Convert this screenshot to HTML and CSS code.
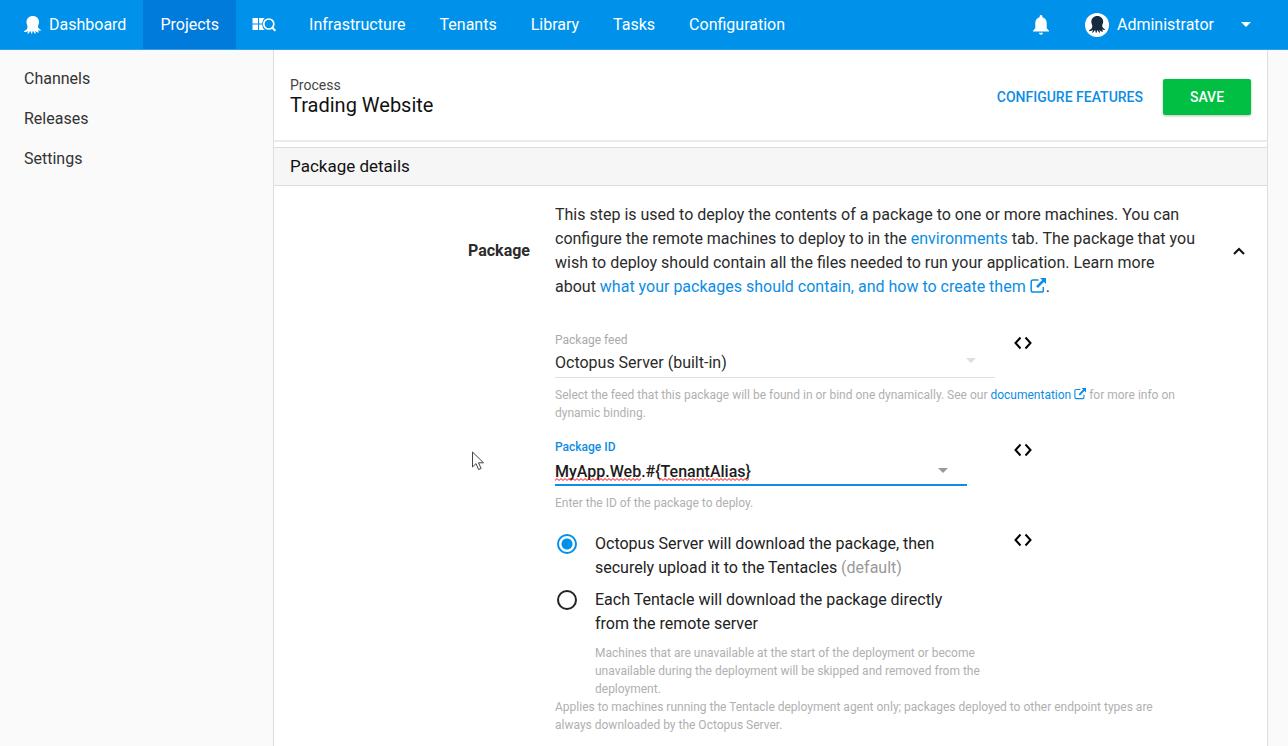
FILE: index.html
```html
<!DOCTYPE html>
<html lang="en">
<head>
<meta charset="utf-8">
<meta name="viewport" content="width=device-width, initial-scale=1">
<title>Trading Website - Process</title>
<link rel="stylesheet" href="styles.css">
</head>
<body>
<svg class="defs" aria-hidden="true">
  <symbol id="octopus" viewBox="0 0 16 17">
    <path d="M8.300 0C4.800 0 2.300 2.500 2.300 5.800c0 1.700.9 2.800 1 4.300.1 1.800-1 3-2.700 3.900-.9.500-.6 1.200.2 1.200 1.100 0 2.300-.4 3.200-1.100-.1.700-.4 1.200-.7 1.800-.3.700.3 1.100.8.600.9-.7 1.400-1.500 1.800-2.500.5.600.7 1.500.8 2.400.1.600.9.600 1 0 .2-.8.300-1.600.6-2.400.6.800 1.100 1.700 1.800 2.500.5.500 1.100.2.9-.4-.2-.8-.4-1.500-.6-2.200.9 1 1.800 1.600 2.900 1.800.7.100.9-.4.500-.9-.4-.5-.6-1-.7-1.500.7.400 1.400.700 2.200.700.8 0 .9-.6.300-1-1.700-1-2.600-2-2.400-3.400.2-1.400 1-2.300 1-3.800C14.200 2.500 11.800 0 8.300 0z"/>
  </symbol>
  <symbol id="code" viewBox="0 0 18 14">
    <path d="M6.500 1.500 1.500 7l5 5.500M11.500 1.500l5 5.500-5 5.500" fill="none" stroke="currentColor" stroke-width="2"/>
  </symbol>
  <symbol id="external" viewBox="0 0 16 16">
    <path d="M8.500 2H3A1.800 1.800 0 0 0 1.200 3.800v8.500A1.800 1.800 0 0 0 3 14.100h8.500a1.800 1.800 0 0 0 1.800-1.800V9" fill="none" stroke="currentColor" stroke-width="1.500"/>
    <path d="M10 0h6v6l-2.100-2.100-6 6.100-1.800-1.800 6-6.100z" fill="currentColor"/>
  </symbol>
  <symbol id="caret" viewBox="0 0 10 5"><path d="M0 0h10L5 5z"/></symbol>
  <pattern id="wave" width="4" height="3" patternUnits="userSpaceOnUse">
    <path d="M-1 1.500 0 2.500 2 .5 4 2.500 5 1.500" fill="none" stroke="#f00" stroke-width="1"/>
  </pattern>
</svg>

<header class="topbar">
  <nav class="nav" aria-label="Main">
    <a class="nav-link nav-link-home" href="#"><svg class="logo" aria-hidden="true"><use href="#octopus"/></svg>Dashboard</a>
    <a class="nav-link nav-link-active" href="#">Projects</a>
    <a class="nav-link nav-link-search" href="#" aria-label="Search projects">
      <svg class="search-icon" viewBox="0 0 24 15" aria-hidden="true">
        <path fill="#fff" d="M.5 1H6v5.500H.5zM7 1h5.500a7 7 0 0 0-2.300 5.500H7zM.5 7.500H6V13H.5zM7 7.500h3.200a7 7 0 0 0 2.600 5.500H7z"/>
        <circle cx="16.800" cy="7" r="5" fill="none" stroke="#fff" stroke-width="1.700"/>
        <path d="m20.200 10.500 3.200 3.400" stroke="#fff" stroke-width="2"/>
      </svg>
    </a>
    <a class="nav-link" href="#">Infrastructure</a>
    <a class="nav-link" href="#">Tenants</a>
    <a class="nav-link" href="#">Library</a>
    <a class="nav-link" href="#">Tasks</a>
    <a class="nav-link" href="#">Configuration</a>
  </nav>
  <div class="account">
    <button class="icon-button" type="button" aria-label="Notifications">
      <svg class="bell" viewBox="0 0 16 20" aria-hidden="true"><path fill="#fff" d="M8 0c.8 0 1.400.6 1.400 1.400v.8C12 2.800 13.700 5 13.700 8v5.300l2.300 2.400v.9H0v-.9l2.300-2.400V8c0-3 1.700-5.200 4.300-5.800v-.8C6.600.6 7.200 0 8 0zM6 17.700h4A2 2 0 0 1 6 17.700z"/></svg>
    </button>
    <button class="user" type="button">
      <span class="avatar"><svg class="avatar-logo" aria-hidden="true"><use href="#octopus"/></svg></span>
      Administrator
      <svg class="caret caret-user" aria-hidden="true"><use href="#caret"/></svg>
    </button>
  </div>
</header>

<div class="page">
  <nav class="sidebar" aria-label="Project">
    <a href="#">Channels</a>
    <a href="#">Releases</a>
    <a href="#">Settings</a>
  </nav>

  <main class="content">
    <div class="title-bar">
      <div>
        <div class="breadcrumb">Process</div>
        <h1>Trading Website</h1>
      </div>
      <div class="actions">
        <button class="button-flat" type="button">CONFIGURE FEATURES</button>
        <button class="button-save" type="button">SAVE</button>
      </div>
    </div>

    <h2 class="section-title">Package details</h2>

    <section class="package">
      <div class="summary">
        <h3>Package</h3>
        <p>This step is used to deploy the contents of a package to one or more machines. You can configure the remote machines to deploy to in the <a href="#">environments</a> tab. The package that you wish to deploy should contain all the files needed to run your application. Learn more about <a href="#">what your packages should contain, and how to create them <svg class="external" aria-hidden="true"><use href="#external"/></svg></a>.</p>
        <button class="icon-button" type="button" aria-label="Collapse"><svg class="chevron" viewBox="0 0 12 8" aria-hidden="true"><path d="m1 7 5-5 5 5" fill="none" stroke="#111" stroke-width="2"/></svg></button>
      </div>

      <form class="fields">
        <div class="field field-feed">
          <div class="control">
            <label for="feed">Package feed</label>
            <select id="feed"><option>Octopus Server (built-in)</option></select>
            <svg class="caret caret-light" aria-hidden="true"><use href="#caret"/></svg>
          </div>
          <button class="icon-button bind" type="button" aria-label="Bind feed"><svg class="code" aria-hidden="true"><use href="#code"/></svg></button>
          <p class="help">Select the feed that this package will be found in or bind one dynamically. See our <a href="#">documentation <svg class="external-small" aria-hidden="true"><use href="#external"/></svg></a> for more info on dynamic binding.</p>
        </div>

        <div class="field field-id">
          <div class="control control-active">
            <label for="package-id">Package ID</label>
            <input id="package-id" type="text" value="MyApp.Web.#{TenantAlias}" spellcheck="false">
            <svg class="spelling" aria-hidden="true"><rect width="86" height="3" fill="url(#wave)"/><rect x="104" width="90" height="3" fill="url(#wave)"/></svg>
            <svg class="caret caret-dark" aria-hidden="true"><use href="#caret"/></svg>
          </div>
          <button class="icon-button bind" type="button" aria-label="Bind package ID"><svg class="code" aria-hidden="true"><use href="#code"/></svg></button>
          <p class="help">Enter the ID of the package to deploy.</p>
        </div>

        <div class="field field-download">
          <div class="options">
            <label class="option"><input type="radio" name="download" checked><span>Octopus Server will download the package, then securely upload it to the Tentacles <span class="muted">(default)</span></span></label>
            <label class="option"><input type="radio" name="download"><span>Each Tentacle will download the package directly from the remote server</span></label>
            <p class="help help-option">Machines that are unavailable at the start of the deployment or become unavailable during the deployment will be skipped and removed from the deployment.</p>
          </div>
          <button class="icon-button bind" type="button" aria-label="Bind download option"><svg class="code" aria-hidden="true"><use href="#code"/></svg></button>
          <p class="help">Applies to machines running the Tentacle deployment agent only; packages deployed to other endpoint types are always downloaded by the Octopus Server.</p>
        </div>
      </form>
    </section>
  </main>
</div>
<svg class="pointer" viewBox="0 0 14 20" aria-hidden="true"><path d="M1.500 1v15l3.500-3.400 2.600 5.900 2.500-1.100-2.600-5.600h5z" fill="#fff" stroke="#444" stroke-width="1"/></svg>
</body>
</html>
```

FILE: styles.css
```css
* { box-sizing: border-box; }

body {
  margin: 0;
  min-height: 100vh;
  display: flex;
  flex-direction: column;
  background: #fafafa;
  color: #2b2b2b;
  font: 16px/24px Roboto, sans-serif;
}

h1, h2, h3, p { margin: 0; font-weight: 400; }
a { color: #0d8de4; text-decoration: none; }
button, input, select { font: inherit; color: inherit; }
button { padding: 0; border: 0; background: none; cursor: pointer; }
.defs { position: absolute; width: 0; height: 0; }

/* Top bar */
.topbar {
  display: flex;
  justify-content: space-between;
  background: #0092ea;
  border-bottom: 1px solid #2ba0ec;
  color: #fff;
}
.nav { display: flex; }
.nav-link {
  display: flex;
  align-items: center;
  height: 49px;
  padding: 0 17px;
  color: #fff;
}
.nav-link-home { gap: 8px; padding-left: 24px; }
.nav-link-active { background: #007adb; }
.nav-link-search { padding: 0 16px; }
.logo { width: 17px; height: 18px; fill: #fff; }
.search-icon { width: 24px; height: 15px; }
.account { display: flex; align-items: center; gap: 36px; padding-right: 37px; }
.icon-button { display: flex; align-items: center; justify-content: center; }
.bell { width: 16px; height: 20px; }
.user { display: flex; align-items: center; gap: 8px; }
.avatar {
  display: flex;
  align-items: center;
  justify-content: center;
  width: 24px;
  height: 24px;
  border-radius: 50%;
  background: #fff;
}
.avatar-logo { width: 16px; height: 17px; fill: #152b40; }
.caret { width: 10px; height: 5px; }
.caret-user { margin-left: 19px; fill: #fff; }

/* Page frame */
.page { display: flex; flex: 1; }
.sidebar {
  display: flex;
  flex-direction: column;
  gap: 16px;
  width: 273px;
  flex-shrink: 0;
  padding: 17px 24px;
}
.sidebar a { color: #333; }
.content {
  flex: 1;
  min-width: 0;
  margin-right: 20px;
  background: #fff;
  border: solid #dedede;
  border-width: 0 1px;
}
.title-bar {
  display: flex;
  align-items: center;
  justify-content: space-between;
  height: 92px;
  margin-bottom: 5px;
  padding: 4px 16px 0;
  border-bottom: 2px solid #ebebeb;
}
.breadcrumb { font-size: 14px; line-height: 16px; color: #444; }
h1 { font-size: 20px; line-height: 24px; color: #111; }
.actions { display: flex; align-items: center; gap: 20px; }
.button-flat { font-size: 14px; font-weight: 500; color: #0d8de4; }
.button-save {
  width: 88px;
  height: 36px;
  border-radius: 2px;
  background: #00bf43;
  box-shadow: 0 1px 3px #0004;
  color: #fff;
  font-size: 14px;
  font-weight: 500;
}
.section-title {
  padding: 6px 16px;
  border: solid #dedede;
  border-width: 1px 0;
  background: #f6f6f6;
  color: #111;
  font-size: 17px;
  line-height: 25px;
}

/* Package section */
.package { padding: 17px 16px 12px; }
.summary {
  display: grid;
  grid-template-columns: 240px 1fr 24px;
  column-gap: 25px;
}
.summary h3 { padding-top: 36px; text-align: right; font-size: 16px; font-weight: 700; }
.summary .icon-button { align-self: start; height: 24px; margin-top: 36px; }
.summary p { max-width: 642px; margin-right: -16px; }
.chevron { width: 12px; height: 8px; }
.external { width: 16px; height: 16px; vertical-align: -2px; }
.external-small { width: 12px; height: 12px; vertical-align: -1px; }

.fields { margin: 32px 50px 0 265px; }
.field {
  display: grid;
  grid-template-columns: 440px 18px;
  column-gap: 19px;
  justify-content: start;
}
.field-id { grid-template-columns: 412px 18px; column-gap: 47px; margin-top: 16px; }
.field-download { margin-top: 20px; }
.bind { align-self: start; height: 24px; }
.field-download .bind { height: 16px; }
.code { width: 18px; height: 14px; color: #000; }
.control { position: relative; display: flex; flex-direction: column; border-bottom: 1px solid #e0e0e0; }
.control-active { border-bottom: 2px solid #0d8de4; }
.control label { font-size: 12px; line-height: 18px; color: #aaa; }
.control-active label { color: #0d8de4; font-weight: 500; }
.control select, .control input {
  width: 100%;
  height: 28px;
  padding: 0;
  border: 0;
  outline: 0;
  background: transparent;
  appearance: none;
}
.control input { padding-top: 2px; font-weight: 500; color: #1c1c1c; }
.control .caret { position: absolute; right: 19px; bottom: 14px; pointer-events: none; }
.control .caret-light { fill: #dedede; }
.control .caret-dark { fill: #999; bottom: 11px; }
.spelling { position: absolute; left: 0; bottom: 3px; width: 194px; height: 3px; pointer-events: none; }
.help { grid-column: 1 / -1; font-size: 12px; line-height: 18px; color: #b0b0b0; }
.field > .help { width: 632px; margin-top: 8px; }
.field-download > .help { margin-top: 0; }
.option {
  display: grid;
  grid-template-columns: 24px 1fr;
  column-gap: 16px;
  padding-right: 24px;
  margin-bottom: 8px;
  color: #222;
}
.option input {
  appearance: none;
  width: 20px;
  height: 20px;
  margin: 2px;
  border: 2px solid #222;
  border-radius: 50%;
}
.option input:checked {
  border-color: #0092ea;
  background: radial-gradient(circle, #0092ea 5px, transparent 6px);
}
.muted { color: #999; }
.help-option { margin-left: 40px; }

/* Mouse pointer over the page */
.pointer { position: absolute; left: 471px; top: 451px; width: 14px; height: 20px; pointer-events: none; }
```
